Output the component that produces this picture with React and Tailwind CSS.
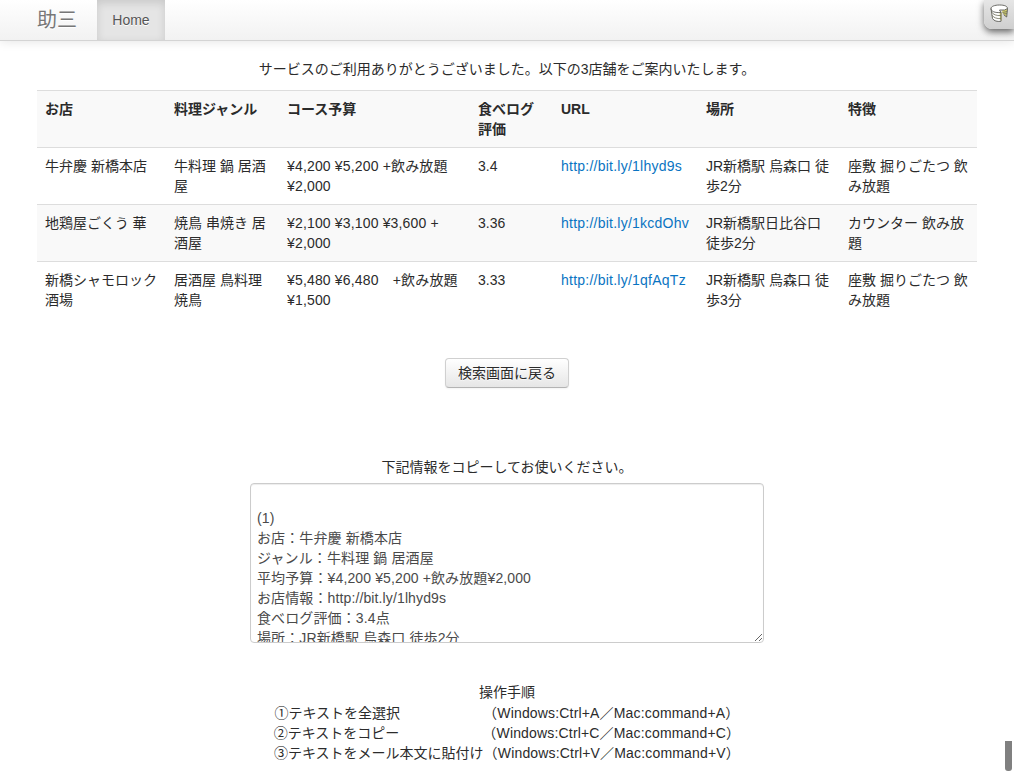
import { useState } from 'react';

const columns = [
  { key: 'name', label: 'お店', width: 'w-[129px]' },
  { key: 'genre', label: '料理ジャンル', width: 'w-[113px]' },
  { key: 'budget', label: 'コース予算', width: 'w-[191px]', cell: 'tracking-[0.16px]' },
  { key: 'score', label: '食べログ\n評価', width: 'w-[83px]' },
  { key: 'url', label: 'URL', width: 'w-[145px]', cell: 'tracking-[0.24px]' },
  { key: 'place', label: '場所', width: 'w-[142px]' },
  { key: 'feature', label: '特徴', width: 'w-[137px]' },
];

const shops = [
  {
    name: '牛弁慶 新橋本店',
    genre: '牛料理 鍋 居酒\n屋',
    budget: '¥4,200 ¥5,200 +飲み放題\n¥2,000',
    score: '3.4',
    url: 'http://bit.ly/1lhyd9s',
    place: 'JR新橋駅 烏森口 徒\n歩2分',
    feature: '座敷 掘りごたつ 飲\nみ放題',
  },
  {
    name: '地鶏屋ごくう 華',
    genre: '焼鳥 串焼き 居\n酒屋',
    budget: '¥2,100 ¥3,100 ¥3,600 +\n¥2,000',
    score: '3.36',
    url: 'http://bit.ly/1kcdOhv',
    place: 'JR新橋駅日比谷口\n徒歩2分',
    feature: 'カウンター 飲み放\n題',
  },
  {
    name: '新橋シャモロック\n酒場',
    genre: '居酒屋 鳥料理\n焼鳥',
    budget: '¥5,480 ¥6,480　+飲み放題\n¥1,500',
    score: '3.33',
    url: 'http://bit.ly/1qfAqTz',
    place: 'JR新橋駅 烏森口 徒\n歩3分',
    feature: '座敷 掘りごたつ 飲\nみ放題',
  },
];

const shareText = `
(1)
お店：牛弁慶 新橋本店
ジャンル：牛料理 鍋 居酒屋
平均予算：¥4,200 ¥5,200 +飲み放題¥2,000
お店情報：http://bit.ly/1lhyd9s
食べログ評価：3.4点
場所：JR新橋駅 烏森口 徒歩2分`;

const steps = [
  { label: '①テキストを全選択　　　　　　', keys: '（Windows:Ctrl+A／Mac:command+A）', gap: 'ml-[6px]' },
  { label: '②テキストをコピー　　　　　　', keys: '（Windows:Ctrl+C／Mac:command+C）', gap: 'ml-[6px]' },
  { label: '③テキストをメール本文に貼付け', keys: '（Windows:Ctrl+V／Mac:command+V）', gap: 'ml-0' },
];

const CakeIcon = () => (
  <svg width="19" height="19" viewBox="0 0 19 19" fill="none" strokeLinejoin="round">
    <path d="M1 4.500l1.500 10C4 16.500 7 17.800 11 17.300V8z" fill="#fff" />
    <path d="M9.500 6.500l2 2.500v8l-1.500-2zM12 6.500l5.500-1.500-1 8-4-4z" fill="#d3cf6b" />
    <path d="M9.500 6L11 8.500C5 9 1 7.500 1 4.500 1 2.500 4.500 1 9.500 1s8 1.200 8 3.500l-3 1.500z" fill="#fff" />
    <path
      d="M9.500 6L11 8.500C5 9 1 7.500 1 4.500 1 2.500 4.500 1 9.500 1s8 1.200 8 3.500l-3 1.500zM1 4.500l1.500 10C4 17 7 17.800 11 17.300V8.500M17.500 4.500l-.8 8.500-2.700-2"
      stroke="#5c5c58"
      strokeWidth="0.9"
    />
    <path d="M1.500 7.800c1.500 3 5 4 9.500 3.700M2 11.200c1.500 2.500 5 3.700 9 3.400M12.500 8.500l4.700-1M13 10l4-.5" stroke="#6e6e5a" strokeWidth="0.8" />
  </svg>
);

const Navbar = () => (
  <div className="flex h-[41px] border-b border-[#d4d4d4] bg-linear-to-b from-white to-[#f2f2f2] pl-[37px] shadow-[0_1px_10px_rgba(0,0,0,0.1)]">
    <a className="w-[60px] pt-[10px] text-[20px] leading-[20px] text-[#777] [text-shadow:0_1px_0_#fff]">助三</a>
    <a className="w-[68px] bg-[#e5e5e5] pt-[10px] text-center text-[#555] shadow-[inset_0_3px_8px_rgba(0,0,0,0.125)] [text-shadow:0_1px_0_#fff]">
      Home
    </a>
  </div>
);

const ShopTable = () => (
  <table className="w-[940px] table-fixed border-collapse text-left">
    <thead>
      <tr className="h-[57px] border-t border-[#ddd] bg-[#f9f9f9]">
        {columns.map((col) => (
          <th key={col.key} className={`${col.width} p-2 align-top font-bold whitespace-pre`}>
            {col.label}
          </th>
        ))}
      </tr>
    </thead>
    <tbody>
      {shops.map((shop) => (
        <tr key={shop.url} className="h-[57px] border-t border-[#ddd] even:bg-[#f9f9f9]">
          {columns.map((col) => (
            <td key={col.key} className={`p-2 align-top whitespace-pre ${col.cell || ''}`}>
              {col.key === 'url' ? (
                <a href={shop.url} className="text-[#0a74c2]">{shop.url}</a>
              ) : (
                shop[col.key]
              )}
            </td>
          ))}
        </tr>
      ))}
    </tbody>
  </table>
);

const App = () => {
  const [text, setText] = useState(shareText);

  return (
    <div className="relative h-[773px] w-[1014px] overflow-hidden bg-white font-['Liberation_Sans','Noto_Sans_CJK_JP',sans-serif] text-[14px] leading-[20px] text-[#2b2b2b]">
      <Navbar />

      <main className="flex flex-col items-center">
        <p className="mt-[18px] mb-[11px]">サービスのご利用ありがとうございました。以下の3店舗をご案内いたします。</p>
        <ShopTable />
        <button className="mt-[39px] h-[30px] w-[124px] rounded-[4px] border border-[#d0d0d0] border-b-[#b3b3b3] bg-linear-to-b from-white to-[#e6e6e6] shadow-[inset_0_1px_0_rgba(255,255,255,0.2),0_1px_2px_rgba(0,0,0,0.05)] [text-shadow:0_1px_1px_rgba(255,255,255,0.75)]">
          検索画面に戻る
        </button>
        <p className="mt-[69px]">下記情報をコピーしてお使いください。</p>
        <textarea
          value={text}
          onChange={(e) => setText(e.target.value)}
          className="mt-[6px] h-[160px] w-[514px] resize overflow-hidden rounded-[4px] border border-[#ccc] px-[6px] py-[4px] tracking-[0.12px] text-[#4a4a4a] shadow-[inset_0_1px_1px_rgba(0,0,0,0.075)]"
        />
        <div className="mt-[39px] text-center whitespace-pre">
          <p className="mb-px">操作手順</p>
          {steps.map((step) => (
            <p key={step.label}>
              {step.label}
              <span className={`tracking-[0.17px] ${step.gap}`}>{step.keys}</span>
            </p>
          ))}
        </div>
      </main>

      {/* Corner toolbar toggle */}
      <button className="absolute top-0 right-0 flex h-[29px] w-[30px] items-start rounded-bl-[8px] bg-linear-to-b from-[#e6e6e6] to-[#cfcfcf] pt-[4px] pl-[6px] shadow-[0_3px_7px_rgba(0,0,0,0.6)]">
        <CakeIcon />
      </button>
      <div className="absolute top-[741px] left-[1005px] h-[30px] w-[7px] rounded-b-[3px] bg-[#808080]" />
    </div>
  );
};

export default App;
